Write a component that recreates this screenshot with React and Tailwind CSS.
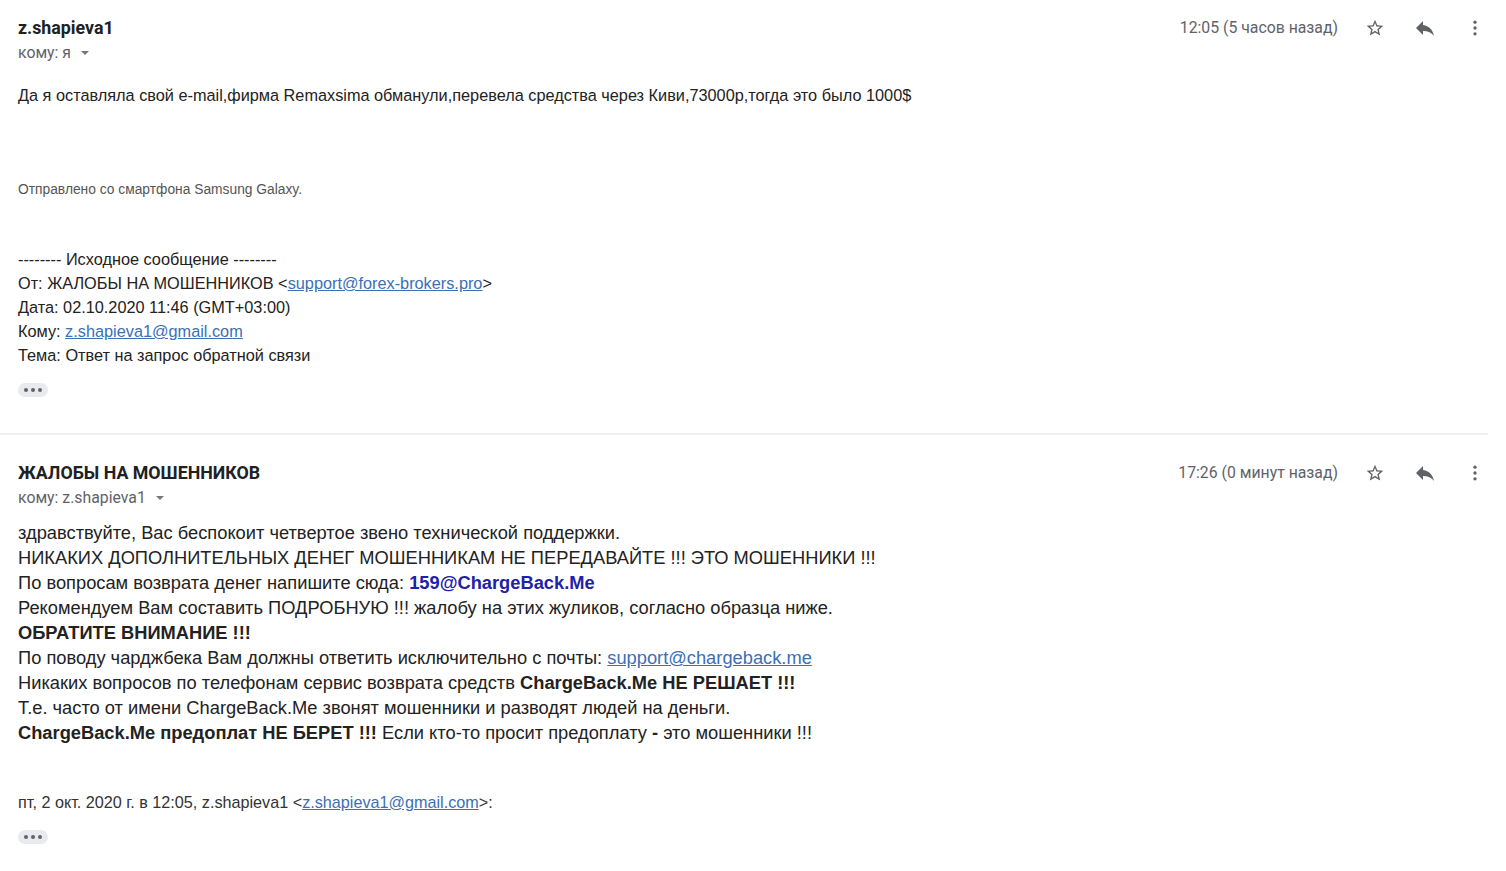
import React from "react";

const ROBOTO = "font-['Roboto',_'Liberation_Sans',_sans-serif]";
const ARIAL = "font-['Liberation_Sans',_Arial,_sans-serif]";

function StarIcon() {
  return (
    <svg className="w-5 h-5" viewBox="0 0 24 24" fill="#5f6368">
      <path d="M22 9.24l-7.19-.62L12 2 9.19 8.63 2 9.24l5.46 4.73L5.82 21 12 17.27 18.18 21l-1.63-7.03L22 9.24zM12 15.4l-3.76 2.27 1-4.28-3.32-2.88 4.38-.38L12 6.1l1.71 4.04 4.38.38-3.32 2.88 1 4.28L12 15.4z" />
    </svg>
  );
}

function ReplyIcon() {
  return (
    <svg className="w-6 h-6" viewBox="0 0 24 24" fill="#5f6368">
      <path d="M10 9V5l-7 7 7 7v-4.1c5 0 8.5 1.6 11 5.1-1-5-4-10-11-11z" />
    </svg>
  );
}

function MoreIcon() {
  return (
    <svg className="w-5 h-5" viewBox="0 0 24 24" fill="#5f6368">
      <circle cx="12" cy="5" r="2" />
      <circle cx="12" cy="12" r="2" />
      <circle cx="12" cy="19" r="2" />
    </svg>
  );
}

function Ellipsis() {
  return (
    <div className="w-[30px] h-[14px] rounded-[7px] bg-[#e8eaed] flex items-center justify-center gap-[3px]">
      <span className="w-[4px] h-[4px] rounded-full bg-[#5f6368]"></span>
      <span className="w-[4px] h-[4px] rounded-full bg-[#5f6368]"></span>
      <span className="w-[4px] h-[4px] rounded-full bg-[#5f6368]"></span>
    </div>
  );
}

function Header({ name, to, time }) {
  return (
    <div className="flex justify-between">
      <div className={ROBOTO}>
        <div className="text-[17.8px] leading-[20px] font-bold text-[#202124]">{name}</div>
        <div className="mt-[5px] flex items-center text-[15.8px] leading-[20px] text-[#5f6368]">
          {to}
          <span className="ml-[10px] w-0 h-0 border-l-[4px] border-r-[4px] border-t-[4px] border-l-transparent border-r-transparent border-t-[#777]"></span>
        </div>
      </div>
      <div className="flex items-start h-[20px]">
        <span className={`${ROBOTO} text-[15.8px] leading-[20px] text-[#5f6368] mr-[27px]`}>{time}</span>
        <div className="flex items-center h-[20px]">
          <StarIcon />
          <span className="ml-[28px]"><ReplyIcon /></span>
          <span className="ml-[28px]"><MoreIcon /></span>
        </div>
      </div>
    </div>
  );
}

function Link({ children }) {
  return <a className="text-[#3b6fb6] underline">{children}</a>;
}

export default function App() {
  return (
    <div className={`bg-white min-h-[871px] w-[1506px] ${ARIAL} text-[#222]`}>
      {/* first message */}
      <div className="pl-[18px] pr-[21px] pt-[18px] pb-[36px]">
        <Header name="z.shapieva1" to="кому: я" time="12:05 (5 часов назад)" />
        <div className="mt-[20px] text-[16.3px] leading-[24px]">
          Да я оставляла свой e-mail,фирма Remaxsima обманули,перевела средства через Киви,73000р,тогда это было 1000$
        </div>
        <div className="mt-[75px] text-[13.8px] leading-[16px] text-[#555]">
          Отправлено со смартфона Samsung Galaxy.
        </div>
        <div className="mt-[49px] text-[16.3px] leading-[24px]">
          <div>-------- Исходное сообщение --------</div>
          <div>
            От: ЖАЛОБЫ НА МОШЕННИКОВ &lt;<Link>support@forex-brokers.pro</Link>&gt;
          </div>
          <div>Дата: 02.10.2020 11:46 (GMT+03:00)</div>
          <div>
            Кому: <Link>z.shapieva1@gmail.com</Link>
          </div>
          <div>Тема: Ответ на запрос обратной связи</div>
        </div>
        <div className="mt-[16px]">
          <Ellipsis />
        </div>
      </div>

      <div className="w-[1488px] h-[2px] bg-[#f0f0f0]"></div>

      {/* second message */}
      <div className="pl-[18px] pr-[21px] pt-[28px]">
        <Header name="ЖАЛОБЫ НА МОШЕННИКОВ" to="кому: z.shapieva1" time="17:26 (0 минут назад)" />
        <div className="mt-[12px] text-[18.3px] leading-[25px]">
          <div>здравствуйте, Вас беспокоит четвертое звено технической поддержки.</div>
          <div>НИКАКИХ ДОПОЛНИТЕЛЬНЫХ ДЕНЕГ МОШЕННИКАМ НЕ ПЕРЕДАВАЙТЕ !!! ЭТО МОШЕННИКИ !!!</div>
          <div>
            По вопросам возврата денег напишите сюда:{" "}
            <span className="font-bold text-[#1f22a8]">159@ChargeBack.Me</span>
          </div>
          <div>Рекомендуем Вам составить ПОДРОБНУЮ !!! жалобу на этих жуликов, согласно образца ниже.</div>
          <div className="font-bold">ОБРАТИТЕ ВНИМАНИЕ !!!</div>
          <div>
            По поводу чарджбека Вам должны ответить исключительно с почты:{" "}
            <Link>support@chargeback.me</Link>
          </div>
          <div>
            Никаких вопросов по телефонам сервис возврата средств{" "}
            <span className="font-bold">ChargeBack.Me НЕ РЕШАЕТ !!!</span>
          </div>
          <div>Т.е. часто от имени ChargeBack.Me звонят мошенники и разводят людей на деньги.</div>
          <div>
            <span className="font-bold">ChargeBack.Me предоплат НЕ БЕРЕТ !!!</span> Если кто-то просит предоплату{" "}
            <span className="font-bold">-</span> это мошенники !!!
          </div>
        </div>
        <div className="mt-[46px] text-[16.2px] leading-[22px] text-[#333]">
          пт, 2 окт. 2020 г. в 12:05, z.shapieva1 &lt;<Link>z.shapieva1@gmail.com</Link>&gt;:
        </div>
        <div className="mt-[17px]">
          <Ellipsis />
        </div>
      </div>
    </div>
  );
}
